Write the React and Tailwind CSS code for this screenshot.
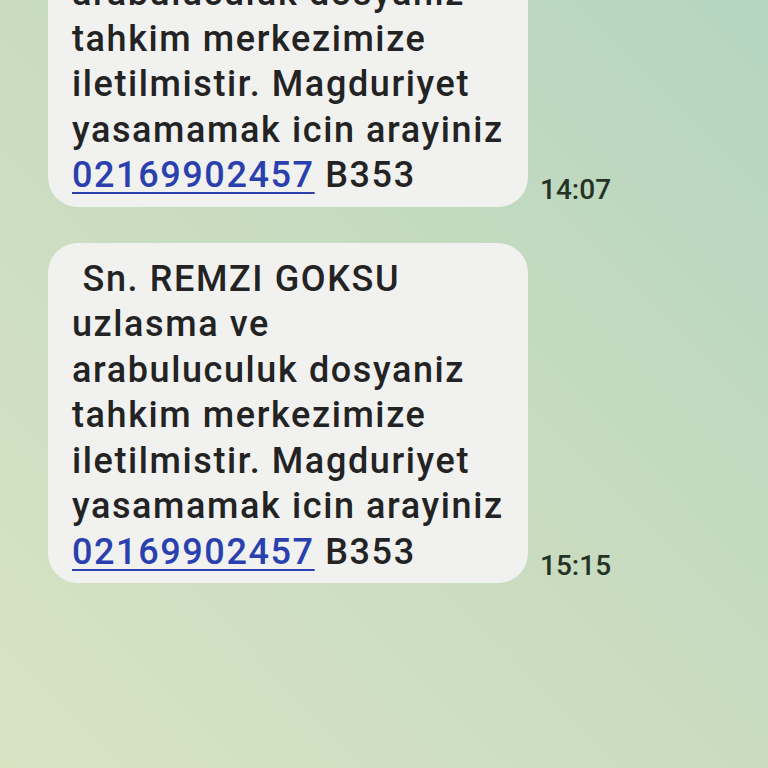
const lines = [
    '\u00a0Sn. REMZI GOKSU',
    'uzlasma ve',
    'arabuluculuk dosyaniz',
    'tahkim merkezimize',
    'iletilmistir. Magduriyet',
    'yasamamak icin arayiniz',
];

const Message = ({ time }) => (
    <div className="flex items-end gap-3">
        <div className="w-[480px] shrink-0 rounded-[30px] bg-[#f1f1f0] pl-6 pr-2 pt-[14px] pb-[8px] text-[36px] font-medium leading-[45.5px] tracking-[1.6px] text-[#232323]">
            {lines.map((l) => (
                <div key={l} className="whitespace-nowrap">{l}</div>
            ))}
            <div className="whitespace-nowrap">
                <a className="text-[#2a40ae] underline decoration-[2px] underline-offset-[5px]">02169902457</a> B353
            </div>
        </div>
        <span className="pb-[3px] text-[28px] font-medium leading-none text-[#253325]">{time}</span>
    </div>
);

export default function App() {
    return (
        <div
            className="h-[768px] w-[768px] overflow-hidden bg-gradient-to-tr from-[#d8e3c4] via-[#c9dcc0] to-[#b5d5c0]"
            style={{ fontFamily: 'Roboto, "Noto Sans", sans-serif' }}
        >
            <div className="mt-[-134px] flex flex-col gap-9 pl-12">
                <Message time="14:07" />
                <Message time="15:15" />
            </div>
        </div>
    );
}
